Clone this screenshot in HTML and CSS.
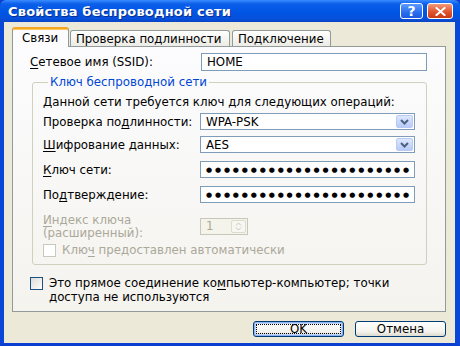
FILE: index.html
```html
<!DOCTYPE html>
<html lang="ru">
<head>
<meta charset="utf-8">
<title>Свойства беспроводной сети</title>
<link rel="stylesheet" href="styles.css">
</head>
<body>
<div class="window">
  <div class="titlebar">
    <span class="title">Свойства беспроводной сети</span>
    <div class="tb-buttons">
      <span class="tb-btn help">?</span>
      <span class="tb-btn close"><svg width="11" height="9" viewBox="0 0 11 9"><path d="M1.5 1 L9.5 8 M9.5 1 L1.5 8" stroke="#fff" stroke-width="2" stroke-linecap="square"/></svg></span>
    </div>
  </div>
  <div class="client">
    <div class="tabs">
      <div class="tab active">Связи</div>
      <div class="tab">Проверка подлинности</div>
      <div class="tab">Подключение</div>
    </div>
    <div class="panel">
      <div class="ssid-row">
        <span class="lbl"><u>С</u>етевое имя (SSID):</span>
        <div class="field ssid">HOME</div>
      </div>
      <fieldset class="group">
        <legend>Ключ беспроводной сети</legend>
        <p class="note">Данной сети требуется ключ для следующих операций:</p>
        <div class="row r1">
          <span class="lbl">Проверка по<u>д</u>линности:</span>
          <div class="combo"><span class="combo-text">WPA-PSK</span><span class="combo-btn"><svg width="9" height="6" viewBox="0 0 9 6"><path d="M1 1 L4.5 4.5 L8 1" fill="none" stroke="#4d6185" stroke-width="2"/></svg></span></div>
        </div>
        <div class="row r2">
          <span class="lbl"><u>Ш</u>ифрование данных:</span>
          <div class="combo"><span class="combo-text">AES</span><span class="combo-btn"><svg width="9" height="6" viewBox="0 0 9 6"><path d="M1 1 L4.5 4.5 L8 1" fill="none" stroke="#4d6185" stroke-width="2"/></svg></span></div>
        </div>
        <div class="row r3">
          <span class="lbl"><u>К</u>люч сети:</span>
          <div class="field pwd">●●●●●●●●●●●●●●●●●●●●●●●</div>
        </div>
        <div class="row r4">
          <span class="lbl">По<u>д</u>тверждение:</span>
          <div class="field pwd">●●●●●●●●●●●●●●●●●●●●●●●</div>
        </div>
        <div class="row r5">
          <span class="lbl disabled idx"><u>И</u>ндекс ключа<br>(расширенный):</span>
          <div class="spin"><span class="spin-text">1</span><span class="spin-btns"><span class="spin-b"><svg width="7" height="4" viewBox="0 0 7 4"><path d="M1 3.5 L3.5 1 L6 3.5" fill="none" stroke="#c9c7ba" stroke-width="1"/></svg></span><span class="spin-b"><svg width="7" height="4" viewBox="0 0 7 4"><path d="M1 0.5 L3.5 3 L6 0.5" fill="none" stroke="#c9c7ba" stroke-width="1"/></svg></span></span></div>
        </div>
        <div class="check dis-check">
          <span class="box box-dis"></span>
          <span class="disabled">Клю<u>ч</u> предоставлен автоматически</span>
        </div>
      </fieldset>
      <div class="check adhoc">
        <span class="box"></span>
        <span class="adhoc-text">Это прямое соединение ко<u>м</u>пьютер-компьютер; точки<br>доступа не используются</span>
      </div>
    </div>
    <div class="buttons">
      <button class="btn default"><span class="focus">OK</span></button>
      <button class="btn">Отмена</button>
    </div>
  </div>
</div>
</body>
</html>
```

FILE: styles.css
```css
* { box-sizing: border-box; }
html, body { margin: 0; padding: 0; background: #0a3fd0; }
body { font-family: "DejaVu Sans", Verdana, sans-serif; font-size: 11.8px; color: #000; }
u { text-decoration: underline; text-underline-offset: 2px; }

.window {
  width: 460px;
  height: 346px;
  display: flex;
  flex-direction: column;
  background: #0a3fd0;
}

.titlebar {
  height: 22px;
  display: flex;
  align-items: center;
  justify-content: space-between;
  padding: 0 7px 0 8px;
  background: linear-gradient(#3b8bff 0%, #0b5fe9 18%, #0055e5 55%, #0750dc 85%, #0a44c4 100%);
  border-radius: 6px 6px 0 0;
}
.title {
  color: #fff;
  font-weight: bold;
  font-size: 13px;
  letter-spacing: 0.2px;
  text-shadow: 1px 1px 0 #0a2d8a;
}
.tb-buttons { display: flex; gap: 4px; align-items: center; }
.tb-btn {
  height: 16px;
  border: 1px solid #fff;
  border-radius: 3px;
  display: flex;
  align-items: center;
  justify-content: center;
  color: #fff;
  font-weight: bold;
  font-size: 14px;
  line-height: 1;
}
.help { background: linear-gradient(#5a9bff, #2a6ef0 60%, #1a5ae0); width: 23px; }
.close { background: linear-gradient(#f09a7c, #e0552f 55%, #c73a17); width: 26px; }

.client {
  flex: 1;
  display: flex;
  flex-direction: column;
  background: #ece9d8;
  border-left: 4px solid #0a46d8;
  border-right: 5px solid #0a46d8;
  border-bottom: 3px solid #0a3fd0;
  padding: 5px 9px 0 8px;
}

.tabs { display: flex; height: 19px; align-items: flex-end; position: relative; z-index: 1; }
.tab {
  height: 16px;
  padding: 0 5px;
  border: 1px solid #919b9c;
  border-bottom: none;
  border-radius: 3px 3px 0 0;
  background: linear-gradient(#ffffff, #ecebe5);
  display: flex;
  align-items: center;
  white-space: nowrap;
  margin-right: 1px;
}
.tab:nth-child(2) { width: 160px; }
.tab:nth-child(3) { width: 99px; margin-left: 1px; }
.tab.active {
  height: 20px;
  width: 57px;
  margin-bottom: -1px;
  padding: 0 9px;
  background: #fcfcfe;
  border-top: 2px solid #f5a623;
  box-shadow: inset 0 1px 0 #ffc85a;
}

.panel {
  height: 266px;
  border: 1px solid #919b9c;
  background: linear-gradient(#fcfcfe, #f4f3ee);
  padding: 6px 18px 0 17px;
}

.lbl { line-height: 14px; }
.field {
  height: 18px;
  border: 1px solid #7f9db9;
  background: #fff;
  display: flex;
  align-items: center;
  padding-left: 5px;
}
.ssid-row { display: flex; align-items: center; justify-content: space-between; }
.ssid { width: 226px; }

.group {
  margin: 4px 0 0 2px;
  border: 1px solid #d0d0bf;
  border-radius: 3px;
  padding: 0 12px 7px 10px;
  min-width: 0;
}
.group legend {
  color: #0046d5;
  padding: 0 2px;
  margin-left: 5px;
  line-height: 14px;
}
.note { margin: 6px 0 0 0; line-height: 14px; }

.row { display: grid; grid-template-columns: 157px 215px; align-items: center; }
.r1 { margin-top: 4px; }
.r2 { margin-top: 6px; }
.r3 { margin-top: 8px; }
.r4 { margin-top: 8px; }
.r5 { margin-top: 11px; }

.combo {
  height: 17px;
  border: 1px solid #7f9db9;
  background: #fff;
  display: flex;
  align-items: center;
  justify-content: space-between;
  padding: 1px 1px 1px 5px;
}
.combo-btn {
  width: 17px;
  height: 13px;
  border: 1px solid #b9caf5;
  border-radius: 2px;
  background: linear-gradient(#dde7fd, #b7cbf7);
  display: flex;
  align-items: center;
  justify-content: center;
}
.pwd {
  height: 17px;
  font-size: 7px;
  letter-spacing: 2.85px;
  padding-left: 5px;
  overflow: hidden;
  white-space: nowrap;
}

.disabled { color: #aca899; }
.idx { line-height: 12.5px; }
.spin {
  width: 48px;
  height: 17px;
  border: 1px solid #c9c7ba;
  background: #f5f4ea;
  display: flex;
  align-items: stretch;
  justify-content: space-between;
  padding: 1px;
}
.spin-text { color: #aca899; padding-left: 4px; line-height: 13px; }
.spin-btns { display: flex; flex-direction: column; width: 15px; border: 1px solid #dedcd0; border-radius: 2px; background: #f7f6f0; }
.spin-b { flex: 1; display: flex; align-items: center; justify-content: center; }

.check { display: flex; align-items: flex-start; gap: 6px; }
.box {
  width: 13px;
  height: 13px;
  flex: none;
  border: 1px solid #1c5180;
  background: linear-gradient(135deg, #dcdcd7, #ffffff);
}
.box-dis { border-color: #cac8bb; background: #fff; }
.dis-check { margin-top: 4px; align-items: center; }
.adhoc { margin: 11px 0 0 0; }
.adhoc .box { margin-top: 1px; }
.adhoc-text { line-height: 14px; }

.buttons {
  display: flex;
  justify-content: flex-end;
  gap: 11px;
  margin-top: 9px;
}
.btn {
  width: 91px;
  height: 16px;
  border: 1px solid #003c74;
  border-radius: 3px;
  background: linear-gradient(#ffffff, #f3f2ec 70%, #dcd9cd);
  font-family: "DejaVu Sans", Verdana, sans-serif;
  font-size: 11.8px;
  color: #000;
  padding: 0;
  display: flex;
  align-items: center;
  justify-content: center;
  line-height: 12px;
}
.btn.default { box-shadow: inset 0 0 0 1px #8cb4f2, inset 0 0 0 2px #c4d7f7; }
.focus { display: flex; align-items: center; justify-content: center; width: 100%; height: 100%; }
.default .focus { outline: 1px dotted #000; outline-offset: -3px; }
```
